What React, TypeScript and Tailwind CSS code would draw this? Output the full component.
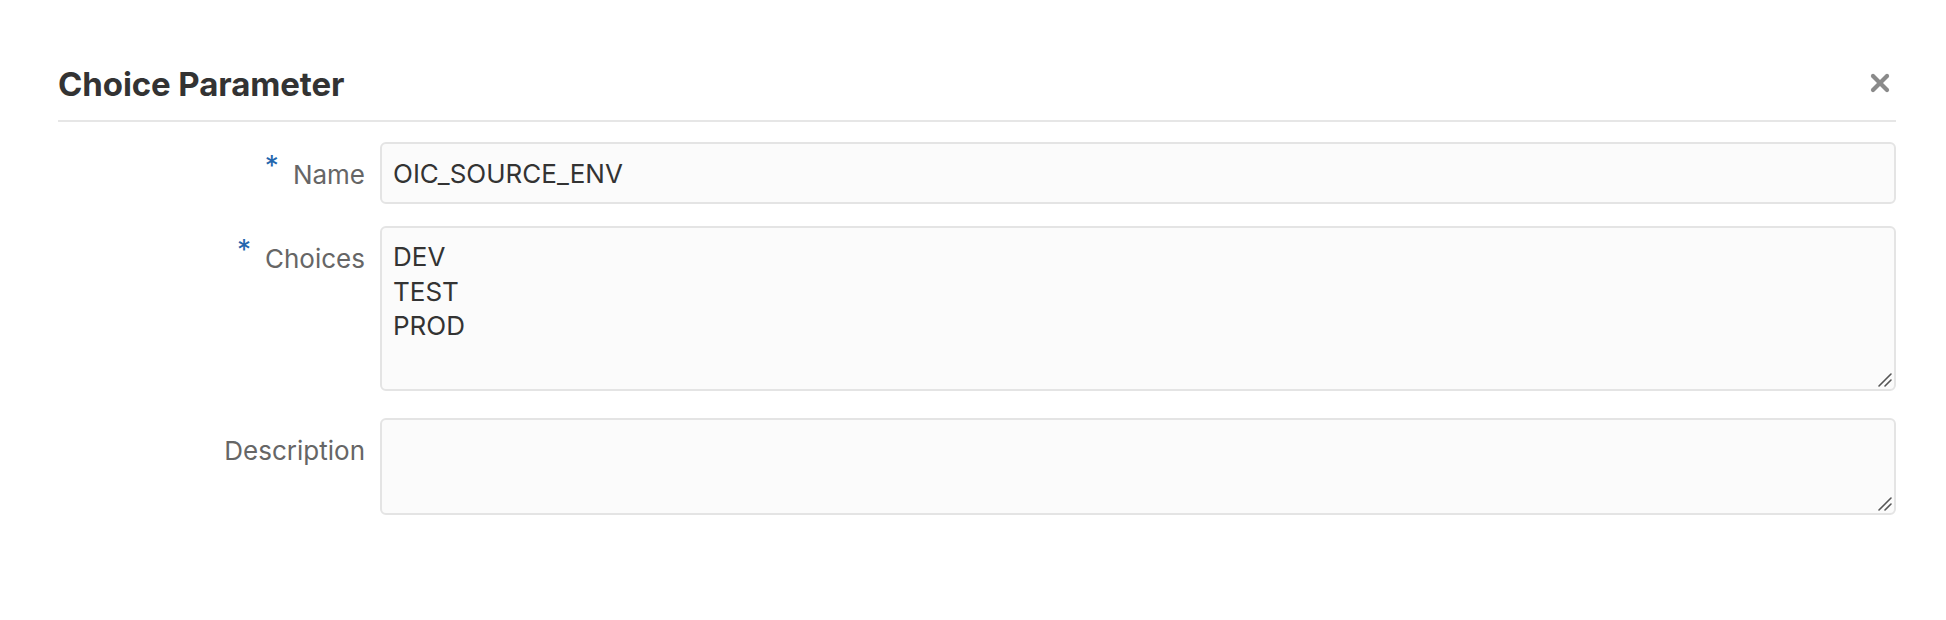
import { X } from 'lucide-react'

const font = { fontFamily: 'Inter, "Noto Sans", sans-serif' }

function Required() {
  return (
    <span className="mr-[14px] inline-block -translate-y-[8px] text-[28px] leading-none text-[#2366ae]">*</span>
  )
}

// mac-style textarea grip, drawn over the corner
function Grip() {
  return (
    <svg
      width="16"
      height="16"
      viewBox="0 0 16 16"
      className="pointer-events-none absolute bottom-[3px] right-[3px]"
    >
      <path d="M2 14 L14 2 M8 14 L14 8" stroke="#555" strokeWidth="1.6" strokeLinecap="round" />
    </svg>
  )
}

interface RowProps {
  label: string
  required?: boolean
  children: React.ReactNode
  className?: string
}

function Row({ label, required, children, className = '' }: RowProps) {
  return (
    <div className={`grid grid-cols-[307px_1fr] gap-x-[15px] ${className}`}>
      <label className="pt-[16px] text-right text-[26px] leading-[34px] text-[#666666]">
        {required && <Required />}
        {label}
      </label>
      {children}
    </div>
  )
}

const fieldCls =
  'block w-full rounded-[6px] border-2 border-[#e4e4e4] bg-[#fbfbfb] px-[11px] text-[26px] text-[#333333] outline-none'

export default function App() {
  return (
    <div className="min-h-[620px] w-full bg-white pl-[58px] pr-[50px] pt-[62px]" style={font}>
      <div className="flex items-center justify-between border-b-2 border-[#e6e6e6] pb-[16px]">
        <h2 className="pt-[2px] text-[33px] font-bold leading-[40px] tracking-[-0.1px] text-[#333333]">Choice Parameter</h2>
        <button className="mr-[2px] text-[#8a8a8a]">
          <X size={28} strokeWidth={3.6} />
        </button>
      </div>

      <div className="pt-[20px]">
        <Row label="Name" required>
          <input readOnly defaultValue="OIC_SOURCE_ENV" className={`h-[62px] ${fieldCls}`} />
        </Row>

        <Row label="Choices" required className="mt-[22px]">
          <div className="relative">
            <textarea
              readOnly
              defaultValue={'DEV\nTEST\nPROD'}
              className={`h-[165px] resize-none pt-[12px] leading-[34.5px] ${fieldCls}`}
            />
            <Grip />
          </div>
        </Row>

        <Row label="Description" className="mt-[27px]">
          <div className="relative">
            <textarea readOnly className={`h-[97px] resize-none pt-[12px] leading-[34.5px] ${fieldCls}`} />
            <Grip />
          </div>
        </Row>
      </div>
    </div>
  )
}
